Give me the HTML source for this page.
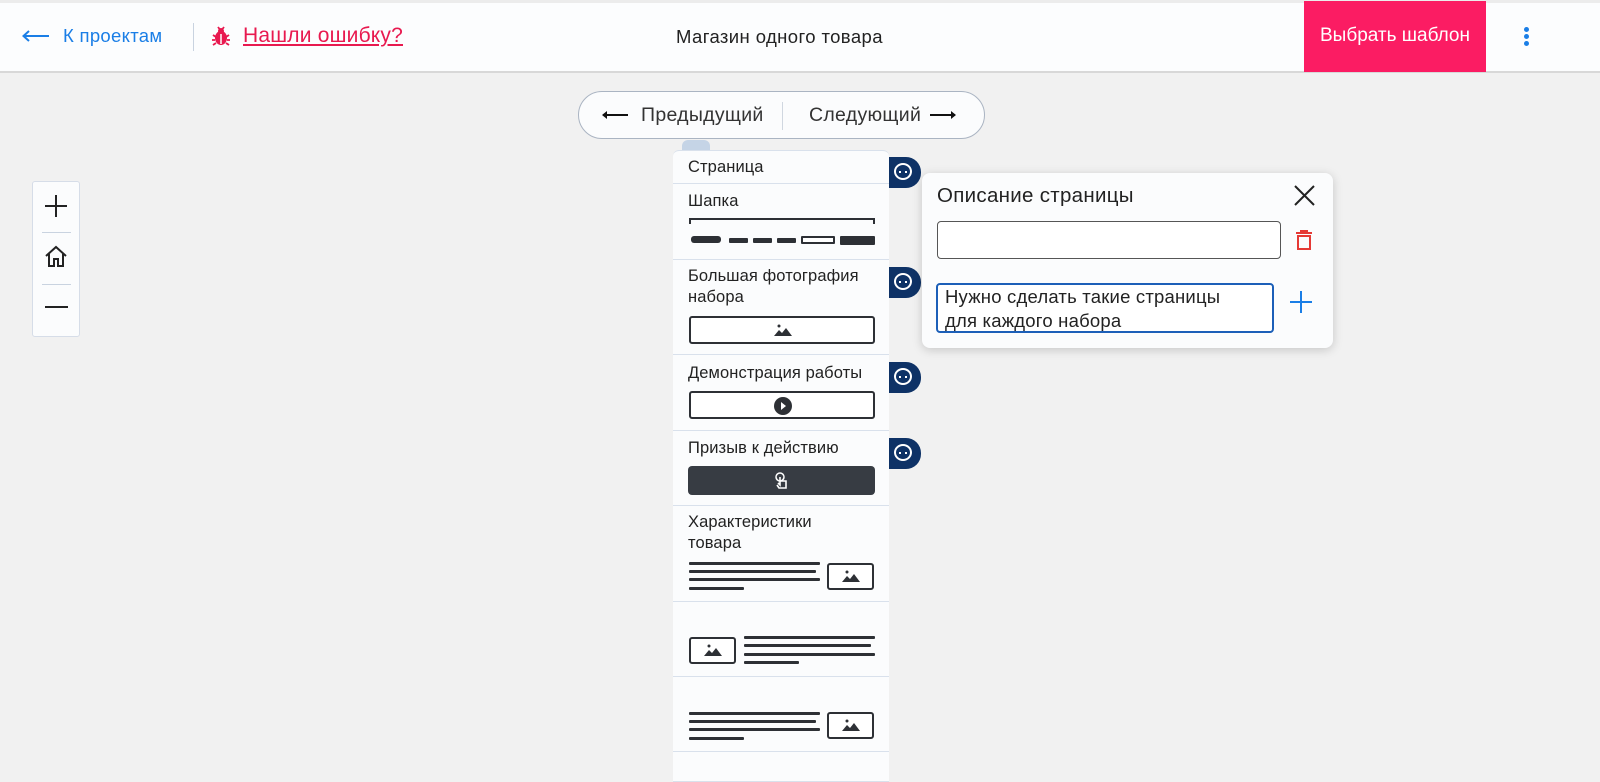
<!DOCTYPE html>
<html><head><meta charset="utf-8"><style>
*{box-sizing:border-box;margin:0;padding:0}
body{width:1600px;height:777px;overflow:hidden;background:#f1f1f1;font-family:"Liberation Sans","Noto Sans CJK SC",sans-serif;position:relative}
.hdr{position:absolute;left:0;top:0;width:1600px;height:73px;background:#fcfdfe;border-bottom:2px solid #d8d8d8;border-top:3px solid #ececec}
.a{position:absolute}
.sec{position:absolute;left:673px;width:216px;background:#fbfcfd;border-bottom:1px solid #d9e1ec}
.sec .t{position:absolute;left:15px;font-size:16.5px;color:#222;line-height:21px;letter-spacing:.1px}
.tab{position:absolute;left:889px;width:32px;height:31px;background:#0e3266;border-radius:0 15px 15px 0}
.tab:after{content:"";position:absolute;left:5px;top:6px;width:18px;height:17px;border:2px solid #fff;border-radius:50%;box-sizing:border-box}
.tab i{position:absolute;left:10px;top:14px;width:8px;height:2px;border-left:2px solid #fff;border-right:2px solid #fff;}
.line{position:absolute;height:3px;background:#2d3035;border-radius:1px}
.imgbox{position:absolute;border:2px solid #2d3035;border-radius:3px;background:#fff}
</style></head><body>
<div class="hdr"></div>
<svg class="a" style="left:22px;top:30px" width="28" height="12"><path d="M2 6H27" stroke="#1a7ee6" stroke-width="2"/><path d="M7 1L1.5 6L7 11" fill="none" stroke="#1a7ee6" stroke-width="2"/></svg>
<div class="a" style="left:63px;top:25px;font-size:18.5px;color:#1a7ee6;letter-spacing:.3px">К проектам</div>
<div class="a" style="left:193px;top:23px;width:1px;height:28px;background:#c9d3e0"></div>
<svg class="a" style="left:210px;top:25px" width="22" height="22" viewBox="0 0 22 22"><ellipse cx="11" cy="13" rx="6" ry="7" fill="#e8194f"/><circle cx="11" cy="6" r="3" fill="#e8194f"/><path d="M11 8V20M3 10l3 2M19 10l-3 2M2 15h3M20 15h-3M3 20l3-2M19 20l-3-2M8 2l1.5 2M14 2l-1.5 2" stroke="#e8194f" stroke-width="1.8"/><path d="M11 9v10" stroke="#fff" stroke-width="1.5"/></svg>
<div class="a" style="left:243px;top:24px;font-size:21px;color:#e8194f;text-decoration:underline;letter-spacing:.2px">Нашли ошибку?</div>
<div class="a" style="left:676px;top:26px;font-size:18.5px;color:#222;letter-spacing:.4px">Магазин одного товара</div>
<div class="a" style="left:1304px;top:1px;width:182px;height:71px;background:#fb1c63;color:#fff;font-size:19px;text-align:center;line-height:70px">Выбрать шаблон</div>
<div class="a" style="left:1524px;top:27px;width:5px;height:5px;border-radius:50%;background:#1a7ee6;box-shadow:0 7px 0 #1a7ee6,0 14px 0 #1a7ee6"></div>

<div class="a" style="left:578px;top:91px;width:407px;height:48px;border:1px solid #aab4c2;border-radius:24px;background:#fbfcfd"></div>
<svg class="a" style="left:601px;top:109px" width="28" height="12"><path d="M2 6H27" stroke="#111" stroke-width="2"/><path d="M1 6L6 2V10Z" fill="#111"/></svg>
<div class="a" style="left:641px;top:104px;font-size:19.5px;color:#333;letter-spacing:.3px">Предыдущий</div>
<div class="a" style="left:782px;top:102px;width:1px;height:28px;background:#d0d7e0"></div>
<div class="a" style="left:809px;top:104px;font-size:19.5px;color:#333;letter-spacing:.3px">Следующий</div>
<svg class="a" style="left:929px;top:109px" width="28" height="12"><path d="M1 6H26" stroke="#111" stroke-width="2"/><path d="M27 6L22 2V10Z" fill="#111"/></svg>

<div class="a" style="left:682px;top:140px;width:28px;height:12px;background:#c5d4e6;border-radius:6px 6px 0 0"></div>
<div class="sec" style="top:150px;height:34px;border-radius:6px 6px 0 0;border-top:1px solid #d9e1ec"><div class="t" style="top:6px">Страница</div></div>
<div class="sec" style="top:184px;height:76px"><div class="t" style="top:7px">Шапка</div>
<div class="a" style="left:16px;top:34px;width:186px;height:6px;border:2px solid #2d3035;border-bottom:none"></div>
<div class="line" style="left:18px;top:52px;width:30px;height:7px;border-radius:3px"></div>
<div class="line" style="left:56px;top:54px;width:19px;height:5px"></div>
<div class="line" style="left:80px;top:54px;width:19px;height:5px"></div>
<div class="line" style="left:104px;top:54px;width:19px;height:5px"></div>
<div class="imgbox" style="left:128px;top:52px;width:34px;height:8px;border-radius:1px"></div>
<div class="line" style="left:167px;top:52px;width:35px;height:9px"></div>
</div>
<div class="sec" style="top:260px;height:95px"><div class="t" style="top:6px">Большая фотография<br>набора</div>
<div class="imgbox" style="left:16px;top:56px;width:186px;height:28px"><svg class="a" style="left:82px;top:5px" width="20" height="14"><circle cx="6" cy="3" r="1.5" fill="#2d3035"/><path d="M1 13L6 7L9 10L13 5L19 13Z" fill="#2d3035"/></svg></div></div>
<div class="sec" style="top:355px;height:76px"><div class="t" style="top:8px">Демонстрация работы</div>
<div class="imgbox" style="left:16px;top:36px;width:186px;height:28px"><svg class="a" style="left:82px;top:3px" width="20" height="20"><circle cx="10" cy="10" r="9" fill="#2d3035"/><path d="M8 6L13 10L8 14Z" fill="#fff"/></svg></div></div>
<div class="sec" style="top:431px;height:75px"><div class="t" style="top:7px">Призыв к действию</div>
<div class="a" style="left:15px;top:35px;width:187px;height:29px;background:#373c43;border-radius:4px"><svg class="a" style="left:85px;top:5px" width="18" height="20"><circle cx="7" cy="6" r="4" fill="none" stroke="#fff" stroke-width="1.5"/><path d="M7 6V14L5 12M7 10h6v7H6L4 14" fill="none" stroke="#fff" stroke-width="1.6"/></svg></div></div>
<div class="sec" style="top:506px;height:96px"><div class="t" style="top:6px">Характеристики<br>товара</div>
<div class="line" style="left:16px;top:56px;width:131px"></div><div class="line" style="left:16px;top:64px;width:127px"></div><div class="line" style="left:16px;top:72px;width:131px"></div><div class="line" style="left:16px;top:81px;width:55px"></div>
<div class="imgbox" style="left:154px;top:57px;width:47px;height:27px"><svg class="a" style="left:12px;top:4px" width="20" height="14"><circle cx="6" cy="3" r="1.5" fill="#2d3035"/><path d="M1 13L6 7L9 10L13 5L19 13Z" fill="#2d3035"/></svg></div></div>
<div class="sec" style="top:602px;height:75px">
<div class="imgbox" style="left:16px;top:35px;width:47px;height:27px"><svg class="a" style="left:12px;top:4px" width="20" height="14"><circle cx="6" cy="3" r="1.5" fill="#2d3035"/><path d="M1 13L6 7L9 10L13 5L19 13Z" fill="#2d3035"/></svg></div>
<div class="line" style="left:71px;top:34px;width:131px"></div><div class="line" style="left:71px;top:42px;width:127px"></div><div class="line" style="left:71px;top:51px;width:131px"></div><div class="line" style="left:71px;top:59px;width:55px"></div></div>
<div class="sec" style="top:677px;height:75px">
<div class="line" style="left:16px;top:35px;width:131px"></div><div class="line" style="left:16px;top:43px;width:127px"></div><div class="line" style="left:16px;top:51px;width:131px"></div><div class="line" style="left:16px;top:60px;width:55px"></div>
<div class="imgbox" style="left:154px;top:35px;width:47px;height:27px"><svg class="a" style="left:12px;top:4px" width="20" height="14"><circle cx="6" cy="3" r="1.5" fill="#2d3035"/><path d="M1 13L6 7L9 10L13 5L19 13Z" fill="#2d3035"/></svg></div></div>
<div class="sec" style="top:752px;height:30px"></div>

<div class="tab" style="top:157px"><i></i></div>
<div class="tab" style="top:267px"><i></i></div>
<div class="tab" style="top:362px"><i></i></div>
<div class="tab" style="top:438px"><i></i></div>

<div class="a" style="left:922px;top:173px;width:411px;height:175px;background:#fbfcfd;border-radius:8px;box-shadow:0 2px 10px rgba(0,0,0,.18)"></div>
<div class="a" style="left:937px;top:184px;font-size:20.5px;color:#222;letter-spacing:.3px">Описание страницы</div>
<svg class="a" style="left:1294px;top:185px" width="21" height="21"><path d="M1 1L20 20M20 1L1 20" stroke="#222" stroke-width="2"/></svg>
<div class="a" style="left:937px;top:221px;width:344px;height:38px;border:1.5px solid #555;border-radius:4px;background:#fff"></div>
<svg class="a" style="left:1295px;top:230px" width="18" height="20"><path d="M1 3H17M6 3V1H12V3" stroke="#e53935" stroke-width="2" fill="none"/><rect x="3" y="6" width="12" height="13" fill="none" stroke="#e53935" stroke-width="2"/></svg>
<div class="a" style="left:936px;top:283px;width:338px;height:50px;border:2px solid #1c5fb8;border-radius:4px;background:#fff;font-size:18.5px;color:#222;line-height:24px;padding:0 7px;letter-spacing:.2px">Нужно сделать такие страницы<br>для каждого набора</div>
<svg class="a" style="left:1290px;top:291px" width="22" height="22"><path d="M11 0V22M0 11H22" stroke="#1a7ee6" stroke-width="2"/></svg>

<div class="a" style="left:32px;top:181px;width:48px;height:156px;background:#fbfcfd;border:1px solid #d6dde8;border-radius:3px"></div>
<svg class="a" style="left:44px;top:194px" width="24" height="24"><path d="M12 1V23M1 12H23" stroke="#222" stroke-width="2"/></svg>
<div class="a" style="left:42px;top:232px;width:29px;height:1px;background:#c9d3e0"></div>
<svg class="a" style="left:43px;top:244px" width="26" height="24"><path d="M3 12L13 3L23 12M6 10V22H11V15H15V22H20V10" fill="none" stroke="#222" stroke-width="2"/></svg>
<div class="a" style="left:42px;top:284px;width:29px;height:1px;background:#c9d3e0"></div>
<div class="a" style="left:45px;top:306px;width:23px;height:2px;background:#222"></div>
</body></html>
